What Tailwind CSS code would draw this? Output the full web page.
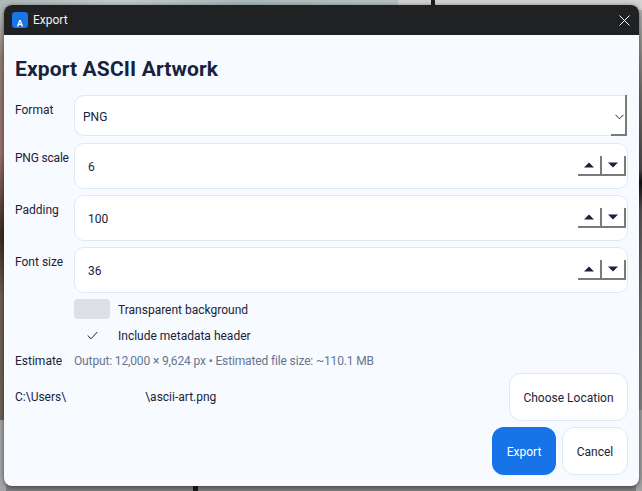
<!DOCTYPE html>
<html><head><meta charset="utf-8">
<script src="https://cdn.jsdelivr.net/npm/@tailwindcss/browser@4"></script>
</head>
<body class="m-0 overflow-hidden">
<div class="relative w-[642px] h-[491px] overflow-hidden bg-[#7d7d7d] font-['Roboto','Noto_Sans',sans-serif]">
  <!-- blurred desktop behind the dialog -->
  <div class="absolute left-0 top-0 w-[398px] h-[10px] bg-[linear-gradient(90deg,#aeb9b6,#c4cccb_30%,#a9b9bc_60%,#b6c2c2)]"></div>
  <div class="absolute left-[398px] top-0 w-[244px] h-[10px] bg-[#d2d2d2]"></div>
  <div class="absolute left-[431px] top-0 w-[4px] h-[6px] bg-[#1d1d1d]"></div>
  <div class="absolute left-0 top-[10px] w-[6px] h-[410px] bg-[linear-gradient(180deg,#b3bcb9_0,#8f7d73_12%,#9a7266_35%,#3c2a22_55%,#6f6052_70%,#6a6456_100%)]"></div>
  <div class="absolute left-0 top-[420px] w-[6px] h-[71px] bg-[#a5a5a8]"></div>
  <div class="absolute left-[636px] top-[10px] w-[6px] h-[400px] bg-[linear-gradient(180deg,#b5b5b5_0,#77746f_20%,#4e4a4c_40%,#121212_43%,#5a5456_50%,#7d7d7d_75%,#888_100%)]"></div>
  <div class="absolute left-[636px] top-[410px] w-[6px] h-[81px] bg-[#a3a3a3]"></div>
  <div class="absolute left-[193px] top-[484px] w-[5px] h-[7px] bg-[#1a1a1a]"></div>
  <div class="absolute left-[4px] top-[5px] w-[635px] h-[481px] rounded-[8px] overflow-hidden flex flex-col bg-[#f7faff] shadow-[0_1px_5px_rgba(0,0,0,0.55)]">
    <div class="h-[30px] shrink-0 bg-[#202122] flex items-center pl-[8px] text-white">
      <div class="w-[16px] h-[16px] rounded-[3px] bg-[#1a73e8] flex items-end justify-center">
        <svg width="8" height="8" viewBox="0 0 8 8" class="mb-[1px]"><path d="M0.8 7.5 L3.2 1 H4.8 L7.2 7.5 H5.7 L5.2 6 H2.8 L2.3 7.5 Z M3.2 4.8 H4.8 L4 2.6 Z" fill="#fff" fill-rule="evenodd"/></svg>
      </div>
      <span class="ml-[5px] text-[12px] leading-[16px] text-[#f2f2f2]">Export</span>
      <svg class="ml-auto mr-[9px]" width="11" height="11" viewBox="0 0 11 11"><path d="M0.5 0.5 L10.5 10.5 M10.5 0.5 L0.5 10.5" stroke="#fff" stroke-width="1"/></svg>
    </div>
    <div class="flex-1 flex flex-col pl-[11px] pr-[11px] text-[#1a2338]">
      <h1 class="mt-[21px] h-[26px] text-[21px] tracking-[0.13px] leading-[26px] font-bold text-[#17223b]">Export ASCII Artwork</h1>
      <div class="mt-[13px] flex h-[41px]">
        <label class="w-[59px] text-[12px] leading-[16px] pt-[7px]">Format</label>
        <div class="relative w-[553px] h-[41px] rounded-l-[10px] border border-[#dfe8f7] border-r-0 bg-white flex items-center pl-[8px] pt-[2px] text-[12px]">
          PNG
          <div class="absolute right-0 -top-px w-[2px] h-[41px] bg-[#7a7a7a]"></div>
          <div class="absolute right-0 -bottom-px w-[16px] h-[2px] bg-[#7a7a7a]"></div>
          <svg class="absolute right-[3px] top-[18px]" width="9" height="6" viewBox="0 0 9 6"><path d="M0.5 0.8 L4.5 4.8 L8.5 0.8" fill="none" stroke="#1a2338" stroke-width="1"/></svg>
        </div>
      </div>
      <div class="mt-[7px] flex h-[45px]">
        <label class="w-[59px] text-[12px] tracking-[-0.2px] leading-[16px] pt-[7px] whitespace-nowrap">PNG scale</label>
        <div class="relative w-[554px] h-[46px] rounded-[10px] border border-[#dfe8f7] bg-white flex items-center pl-[13px] pt-[2px] text-[12px]">6
          <div class="absolute right-[1px] top-[12px] flex">
            <div class="w-[24px] h-[20px] border-r-2 border-b-2 border-[#7a7a7a] flex items-center justify-center"><svg width="10" height="6" viewBox="0 0 10 6"><path d="M5 0.5 L10 5.5 H0 Z" fill="#17223b"/></svg></div>
            <div class="w-[24px] h-[20px] border-r-2 border-b-2 border-[#7a7a7a] flex items-center justify-center"><svg width="10" height="6" viewBox="0 0 10 6"><path d="M0 0.5 H10 L5 5.5 Z" fill="#17223b"/></svg></div>
          </div>
        </div>
      </div>
      <div class="mt-[7px] flex h-[45px]">
        <label class="w-[59px] text-[12px] leading-[16px] pt-[7px]">Padding</label>
        <div class="relative w-[554px] h-[46px] rounded-[10px] border border-[#dfe8f7] bg-white flex items-center pl-[13px] pt-[2px] text-[12px]">100
          <div class="absolute right-[1px] top-[12px] flex">
            <div class="w-[24px] h-[20px] border-r-2 border-b-2 border-[#7a7a7a] flex items-center justify-center"><svg width="10" height="6" viewBox="0 0 10 6"><path d="M5 0.5 L10 5.5 H0 Z" fill="#17223b"/></svg></div>
            <div class="w-[24px] h-[20px] border-r-2 border-b-2 border-[#7a7a7a] flex items-center justify-center"><svg width="10" height="6" viewBox="0 0 10 6"><path d="M0 0.5 H10 L5 5.5 Z" fill="#17223b"/></svg></div>
          </div>
        </div>
      </div>
      <div class="mt-[7px] flex h-[45px]">
        <label class="w-[59px] text-[12px] leading-[16px] pt-[7px]">Font size</label>
        <div class="relative w-[554px] h-[46px] rounded-[10px] border border-[#dfe8f7] bg-white flex items-center pl-[13px] pt-[2px] text-[12px]">36
          <div class="absolute right-[1px] top-[12px] flex">
            <div class="w-[24px] h-[20px] border-r-2 border-b-2 border-[#7a7a7a] flex items-center justify-center"><svg width="10" height="6" viewBox="0 0 10 6"><path d="M5 0.5 L10 5.5 H0 Z" fill="#17223b"/></svg></div>
            <div class="w-[24px] h-[20px] border-r-2 border-b-2 border-[#7a7a7a] flex items-center justify-center"><svg width="10" height="6" viewBox="0 0 10 6"><path d="M0 0.5 H10 L5 5.5 Z" fill="#17223b"/></svg></div>
          </div>
        </div>
      </div>
      <div class="mt-[7px] ml-[59px] flex items-center h-[20px] text-[12px]">
        <div class="w-[36px] h-[20px] rounded-[4px] bg-[#dde1e7]"></div>
        <span class="ml-[8px] pt-[1px]">Transparent background</span>
      </div>
      <div class="mt-[6px] ml-[59px] flex items-center h-[20px] text-[12px]">
        <div class="w-[36px] h-[20px] flex items-center justify-center"><svg width="11" height="9" viewBox="0 0 11 9"><path d="M0.7 4.5 L4 7.8 L10.3 1" fill="none" stroke="#1a2338" stroke-width="1"/></svg></div>
        <span class="ml-[8px] pt-[1px]">Include metadata header</span>
      </div>
      <div class="mt-[8px] flex h-[16px] text-[12px] leading-[16px]">
        <span class="w-[59px]">Estimate</span>
        <span class="text-[#66758f] tracking-[-0.14px]">Output: 12,000 × 9,624 px • Estimated file size: ~110.1 MB</span>
      </div>
      <div class="mt-[4px] flex items-center justify-between h-[47px] w-[613px] text-[12px]">
        <span class="pt-[1px]">C:\Users\<span class="inline-block w-[79px]"></span>\ascii-art.png</span>
        <button class="w-[119px] h-[48px] pt-[2px] rounded-[12px] border border-[#dfe8f7] bg-white">Choose Location</button>
      </div>
      <div class="mt-[7px] flex justify-end gap-[6px] w-[613px] text-[12px]">
        <button class="w-[64px] h-[48px] pt-[2px] rounded-[12px] bg-[#1673e8] text-white">Export</button>
        <button class="w-[66px] h-[48px] pt-[2px] rounded-[12px] border border-[#dfe8f7] bg-white">Cancel</button>
      </div>
    </div>
  </div>
</div>
</body></html>
